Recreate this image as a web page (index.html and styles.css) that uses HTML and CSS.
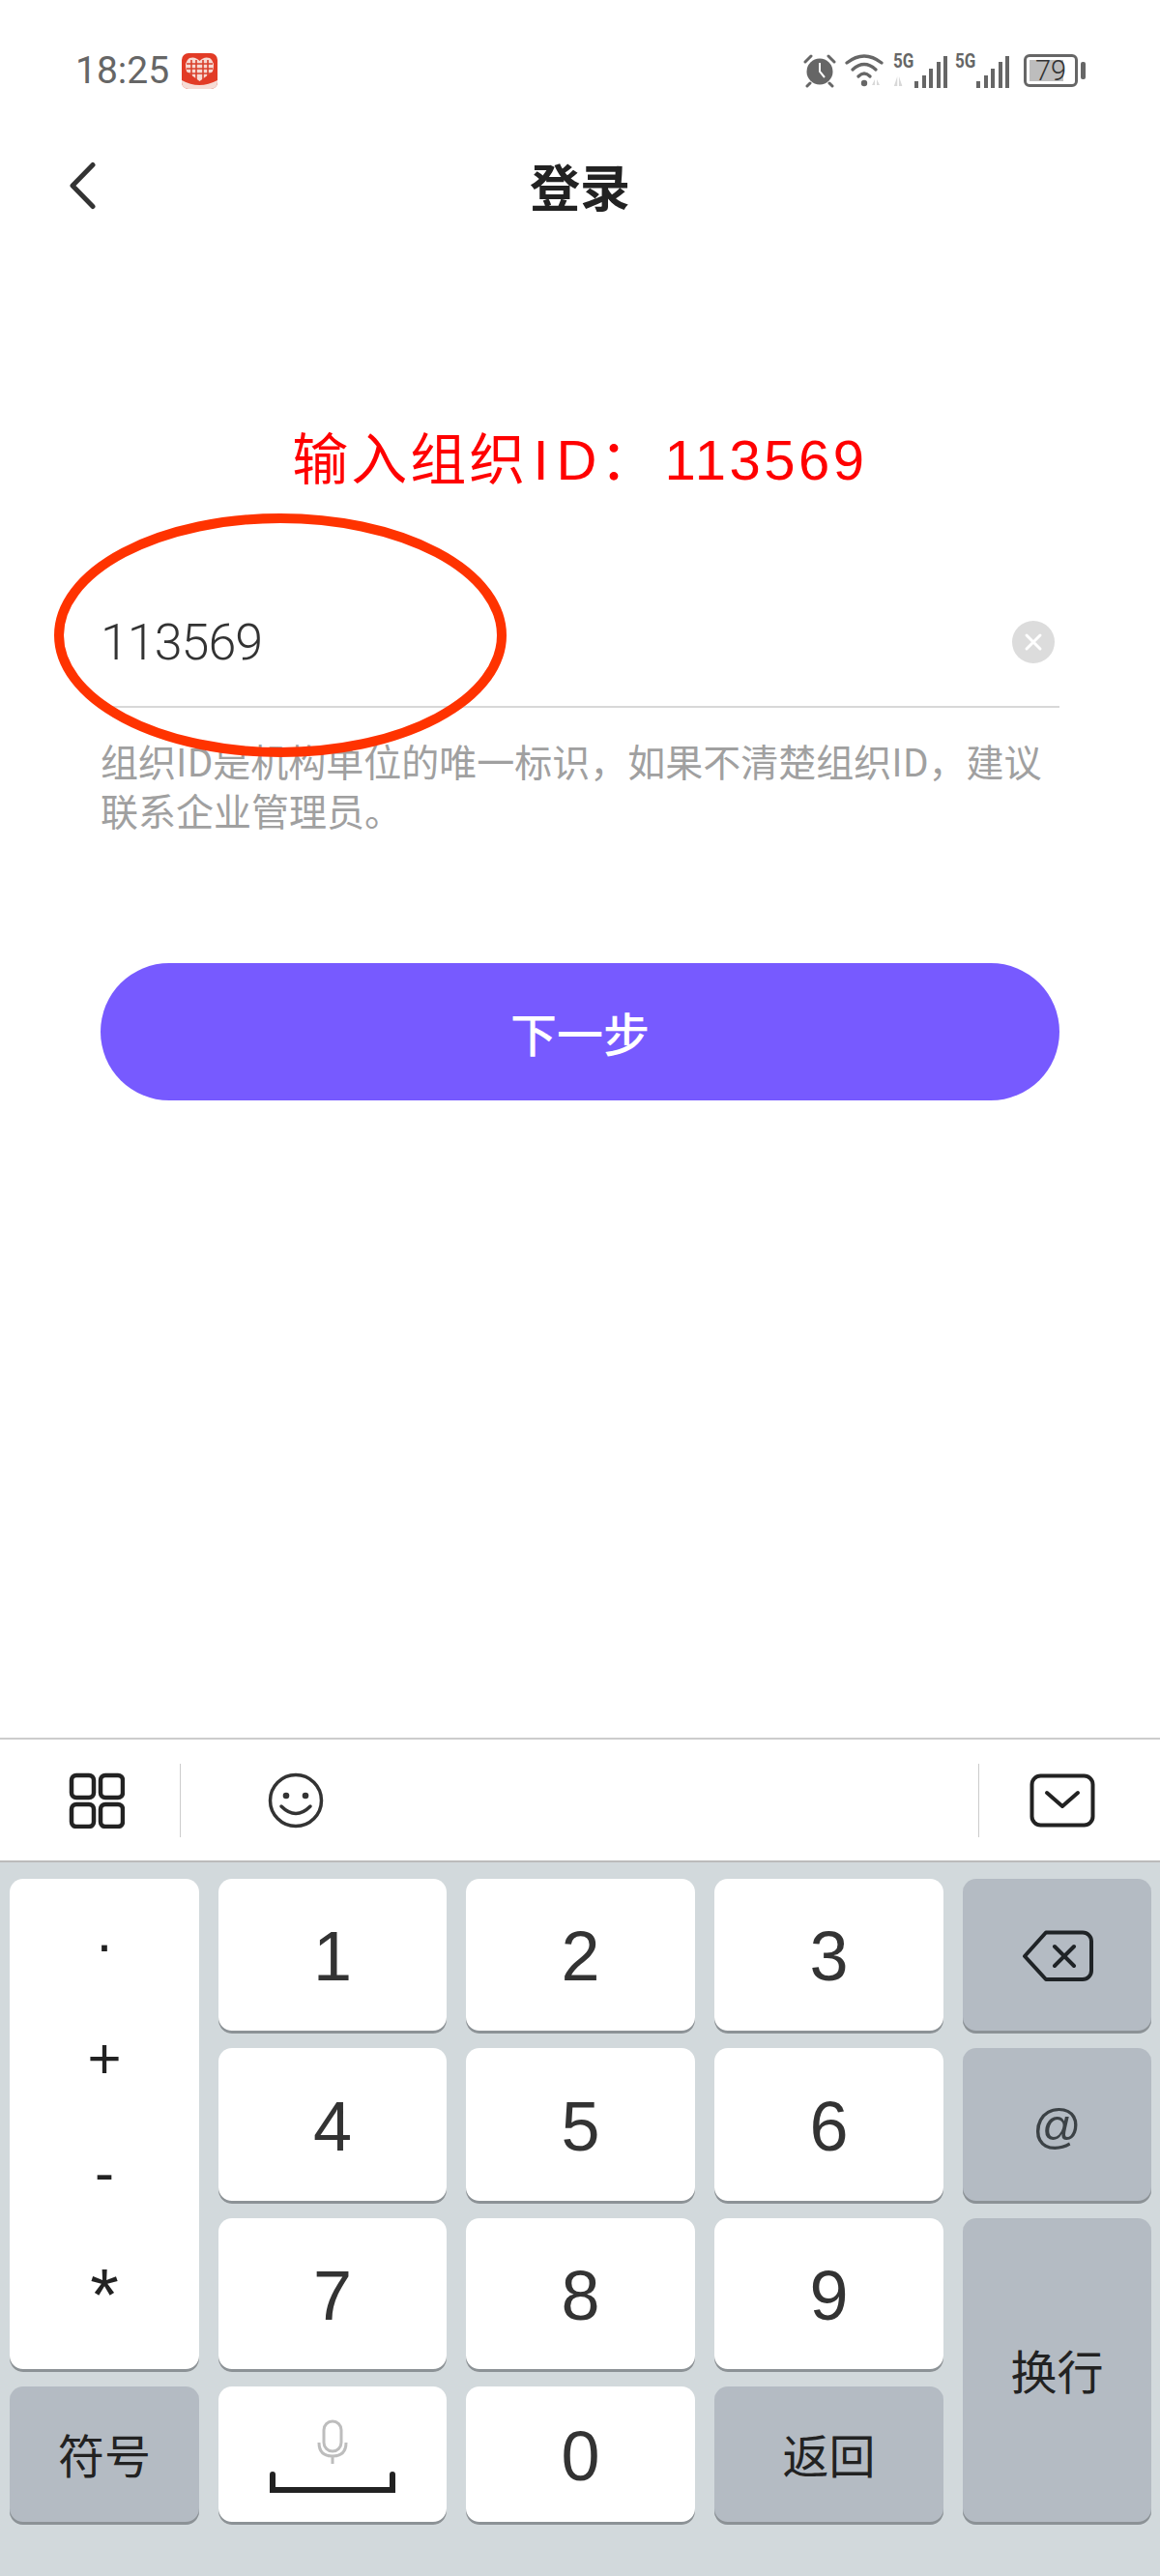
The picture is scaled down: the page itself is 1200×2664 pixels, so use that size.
FILE: index.html
```html
<!DOCTYPE html>
<html>
<head>
<title>登录</title>
<link rel="stylesheet" href="styles.css">
</head>
<body>
<div id="phone">
    <div id="statusbar">
        <div class="status-left">
            <span class="clock">18:25</span>
            <svg class="app-icon" width="37" height="37" viewBox="0 0 37 37">
                <rect width="37" height="37" rx="7" fill="#e23b26"/>
                <path d="M0 28 Q18 38 37 28 V30 a7 7 0 0 1 -7 7 H7 a7 7 0 0 1 -7 -7z" fill="#f6dcd6"/>
                <path d="M18.500 29 L5 19 Q2 9 8 5 Q14 3 18.500 8 Q23 3 29 5 Q35 9 32 19z" fill="#f7d9d2"/>
                <path d="M10 7v18M15 7v20M22 7v20M27 7v18M5 11h27M5 16h27M6 21h25" stroke="#d9402c" stroke-width="1.600"/>
            </svg>
        </div>
        <div class="status-right">
            <svg width="36" height="36" viewBox="0 0 36 36">
                <circle cx="18" cy="19" r="13.500" fill="#666"/>
                <path d="M18 10v9l5 6" fill="none" stroke="#fff" stroke-width="2"/>
                <path d="M3 9 L9 3M33 9 L27 3M8 31l-3 3M28 31l3 3" stroke="#666" stroke-width="3" stroke-linecap="round"/>
            </svg>
            <svg width="42" height="36" viewBox="0 0 42 36">
                <path d="M2 10 Q20 -4 38 10M8 17 Q20 6 32 17M14 24 Q20 18 26 24" fill="none" stroke="#666" stroke-width="3.200" stroke-linecap="round"/>
                <circle cx="20" cy="31" r="3.200" fill="#666"/>
                <path d="M28 33l3-6v6zM33 27l3 6h-3z" fill="#d8d8d8"/>
            </svg>
            <div class="signal">
                <div class="net"><span>5G</span><svg width="18" height="12" viewBox="0 0 18 12"><path d="M1 12l4-10v10zM7 2l4 10h-4z" fill="#d8d8d8"/></svg></div>
                <div class="bars"><i class="b0"></i><i class="b1"></i><i class="b2"></i><i class="b3"></i><i class="b4"></i></div>
            </div>
            <div class="signal">
                <div class="net"><span>5G</span></div>
                <div class="bars"><i class="b0"></i><i class="b1"></i><i class="b2"></i><i class="b3"></i><i class="b4"></i></div>
            </div>
            <div class="battery">
                <div class="batt-body"><div class="batt-fill"></div><span>79</span></div>
                <div class="batt-tip"></div>
            </div>
        </div>
    </div>

    <div id="navbar">
        <svg class="back" width="36" height="50" viewBox="0 0 36 50">
            <path d="M30 3.500 L9 25 L30 46.500" fill="none" stroke="#333" stroke-width="5" stroke-linecap="round" stroke-linejoin="round"/>
        </svg>
        <h3>登录</h3>
    </div>

    <div id="notice">输入组织<span class="letter-i">I</span>D：<span class="notice-num">113569</span></div>

    <div id="form">
        <div class="field">
            <span class="value">113569</span>
            <svg class="clear" width="44" height="44" viewBox="0 0 44 44">
                <circle cx="22" cy="22" r="22" fill="#dcdcdc"/>
                <path d="M15 15l14 14M29 15l-14 14" stroke="#fff" stroke-width="3" stroke-linecap="round"/>
            </svg>
        </div>
        <p class="hint">组织ID是机构单位的唯一标识，如果不清楚组织ID，建议联系企业管理员。</p>
        <div class="next">下一步</div>
    </div>

    <svg class="circle-mark" width="480" height="264" viewBox="0 0 480 264">
        <ellipse cx="238" cy="131" rx="229" ry="121" fill="none" stroke="#ff3300" stroke-width="10"/>
    </svg>

    <div id="toolbar">
        <div class="tool tool-grid">
            <svg width="58" height="58" viewBox="0 0 58 58">
                <g fill="none" stroke="#222" stroke-width="4.500">
                    <rect x="3" y="3" width="23" height="23" rx="5"/><rect x="33" y="3" width="23" height="23" rx="5"/>
                    <rect x="3" y="33" width="23" height="23" rx="5"/><rect x="33" y="33" width="23" height="23" rx="5"/>
                </g>
            </svg>
        </div>
        <div class="tool tool-face">
            <svg width="58" height="58" viewBox="0 0 58 58">
                <circle cx="29" cy="29" r="26.500" fill="none" stroke="#333" stroke-width="3.500"/>
                <circle cx="19" cy="24" r="3.300" fill="#333"/><circle cx="39" cy="24" r="3.300" fill="#333"/>
                <path d="M14 35 Q29 50 44 35" fill="none" stroke="#333" stroke-width="3.500" stroke-linecap="round"/>
            </svg>
        </div>
        <div class="tool tool-hide">
            <svg width="68" height="56" viewBox="0 0 68 56">
                <rect x="2.500" y="2.500" width="63" height="51" rx="9" fill="none" stroke="#222" stroke-width="4"/>
                <path d="M18 20 L34 34 L50 20" fill="none" stroke="#222" stroke-width="4" stroke-linecap="round" stroke-linejoin="round"/>
            </svg>
        </div>
    </div>

    <div id="keyboard">
        <div class="key sym-col"><span>·</span><span>+</span><span>-</span><span class="star">*</span></div>
        <div class="key num">1</div>
        <div class="key num">2</div>
        <div class="key num">3</div>
        <div class="key fn">
            <svg width="74" height="54" viewBox="0 0 74 54">
                <path d="M25 2.500H63a9 9 0 0 1 9 9V42a9 9 0 0 1 -9 9H25L3 27z" fill="none" stroke="#1f2326" stroke-width="4" stroke-linejoin="round"/>
                <path d="M34 17l20 20M54 17L34 37" stroke="#1f2326" stroke-width="4" stroke-linecap="round"/>
            </svg>
        </div>
        <div class="key num">4</div>
        <div class="key num">5</div>
        <div class="key num">6</div>
        <div class="key fn at">@</div>
        <div class="key num">7</div>
        <div class="key num">8</div>
        <div class="key num">9</div>
        <div class="key fn label enter">换行</div>
        <div class="key fn label">符号</div>
        <div class="key space">
            <svg width="130" height="76" viewBox="0 0 130 76">
                <g fill="none" stroke="#bdbdbd" stroke-width="3">
                    <rect x="56" y="2" width="18" height="31" rx="9"/>
                    <path d="M51 24 Q51 38 65 38 Q79 38 79 24M65 38v8"/>
                </g>
                <path d="M3 57V73H127V57" fill="none" stroke="#222" stroke-width="6" stroke-linecap="round"/>
            </svg>
        </div>
        <div class="key num">0</div>
        <div class="key fn label">返回</div>
    </div>
</div>
</body>
</html>
```

FILE: styles.css
```css
html, body {
    margin: 0;
    padding: 0;
    background-color: #fff;
}
#phone {
    width: 1200px;
    height: 2664px;
    position: relative;
    overflow: hidden;
    display: flex;
    flex-direction: column;
    font-family: "Noto Sans CJK SC", sans-serif;
    color: #222;
}
#statusbar {
    height: 146px;
    padding: 0 77px 0 78px;
    display: flex;
    justify-content: space-between;
    align-items: center;
    flex-shrink: 0;
}
.status-left {
    display: flex;
    align-items: center;
    gap: 13px;
}
.clock {
    font-family: Roboto, sans-serif;
    font-size: 39px;
    color: #666;
}
.status-right {
    display: flex;
    align-items: center;
    gap: 8px;
}
.signal {
    width: 56px;
    height: 36px;
    position: relative;
}
.net {
    position: absolute;
    left: 0;
    top: -2px;
    font-family: Roboto, sans-serif;
    font-weight: bold;
    font-size: 20px;
    line-height: 20px;
    color: #666;
    transform: scaleX(.85);
    transform-origin: left;
}
.net svg {
    display: block;
    margin-top: 4px;
}
.bars {
    position: absolute;
    right: 0;
    bottom: 0;
    display: flex;
    align-items: flex-end;
    gap: 3.500px;
}
.bars i {
    display: block;
    width: 4px;
    background-color: #666;
}
.b0 { height: 7px; }
.b1 { height: 13px; }
.b2 { height: 20px; }
.b3 { height: 27px; }
.b4 { height: 33px; }
.battery {
    display: flex;
    align-items: center;
    gap: 3px;
    margin-left: 7px;
}
.batt-body {
    width: 56px;
    height: 34px;
    border: 3px solid #666;
    border-radius: 6px;
    position: relative;
    box-sizing: border-box;
    padding: 3px;
}
.batt-fill {
    width: 79%;
    height: 100%;
    background-color: #bdbdbd;
}
.batt-body span {
    position: absolute;
    left: 0;
    right: 0;
    top: 0;
    text-align: center;
    font-family: Roboto, sans-serif;
    font-size: 29px;
    font-weight: 300;
    line-height: 28px;
    color: #333;
}
.batt-tip {
    width: 5px;
    height: 18px;
    background-color: #666;
    border-radius: 2px;
}
#navbar {
    height: 92px;
    position: relative;
    flex-shrink: 0;
}
.back {
    position: absolute;
    left: 66px;
    top: 21px;
}
#navbar h3 {
    margin: 0;
    text-align: center;
    font-size: 52px;
    line-height: 92px;
    font-weight: bold;
    color: #222;
}
#notice {
    padding-top: 203px;
    text-align: center;
    font-family: "Liberation Sans", "Noto Sans CJK SC", sans-serif;
    font-size: 58px;
    letter-spacing: 3px;
    line-height: 70px;
    color: #f00;
    flex-shrink: 0;
}
.letter-i {
    margin: 0 5px;
}
.notice-num {
    margin-left: 6px;
    letter-spacing: 3.500px;
}
#form {
    padding: 0 104px;
    flex-grow: 1;
}
.field {
    height: 132px;
    margin-top: 87px;
    border-bottom: 2px solid #d8d8d8;
    display: flex;
    justify-content: space-between;
    align-items: center;
    padding-right: 5px;
}
.value {
    font-family: Roboto, sans-serif;
    font-size: 52px;
    font-weight: 300;
    letter-spacing: -1px;
    color: #333;
}
.hint {
    margin: 29px 0 0;
    font-size: 39px;
    line-height: 51px;
    color: #a0a0a0;
}
.next {
    margin-top: 133px;
    height: 142px;
    border-radius: 71px;
    background-color: #775aff;
    color: #fff;
    font-size: 48px;
    font-weight: 500;
    text-align: center;
    line-height: 142px;
}
.circle-mark {
    position: absolute;
    left: 52px;
    top: 526px;
}
#toolbar {
    height: 125px;
    border-top: 2px solid #ccc;
    border-bottom: 2px solid #bbb;
    display: flex;
    align-items: center;
    flex-shrink: 0;
    background-color: #fff;
}
.tool {
    display: flex;
    align-items: center;
    justify-content: center;
    height: 76px;
}
.tool-grid {
    width: 187px;
    padding-left: 14px;
    border-right: 1px solid #ccc;
    box-sizing: border-box;
}
.tool-face {
    width: 238px;
    margin-right: auto;
}
.tool-hide {
    width: 188px;
    padding-right: 16px;
    border-left: 1px solid #ccc;
    box-sizing: border-box;
}
#keyboard {
    height: 738px;
    flex-shrink: 0;
    box-sizing: border-box;
    padding: 17px 9px 54px 10px;
    background-color: #d2d9dc;
    display: grid;
    grid-template-columns: 196px 236px 237px 237px 195px;
    grid-template-rows: 160px 161px 159px 143px;
    column-gap: 20px;
    row-gap: 15px;
}
.key {
    background-color: #fff;
    border-radius: 14px;
    box-shadow: inset 0 -3px 0 #8c9296;
    display: flex;
    align-items: center;
    justify-content: center;
    font-family: "Liberation Sans", sans-serif;
    color: #222;
}
.num {
    font-size: 72px;
    color: #333;
}
.fn {
    background-color: #b4bbc3;
}
.at {
    font-size: 50px;
    color: #3c4246;
}
.label {
    font-family: "Noto Sans CJK SC", sans-serif;
    font-size: 48px;
    padding-bottom: 6px;
    box-sizing: border-box;
}
.enter {
    grid-row: 3 / span 2;
    grid-column: 5;
}
.sym-col {
    grid-row: 1 / span 3;
    flex-direction: column;
    justify-content: space-around;
    font-size: 60px;
    padding: 8px 0 20px;
    box-sizing: border-box;
}
.star {
    font-size: 76px;
    line-height: 70px;
    margin-top: 8px;
}
```
